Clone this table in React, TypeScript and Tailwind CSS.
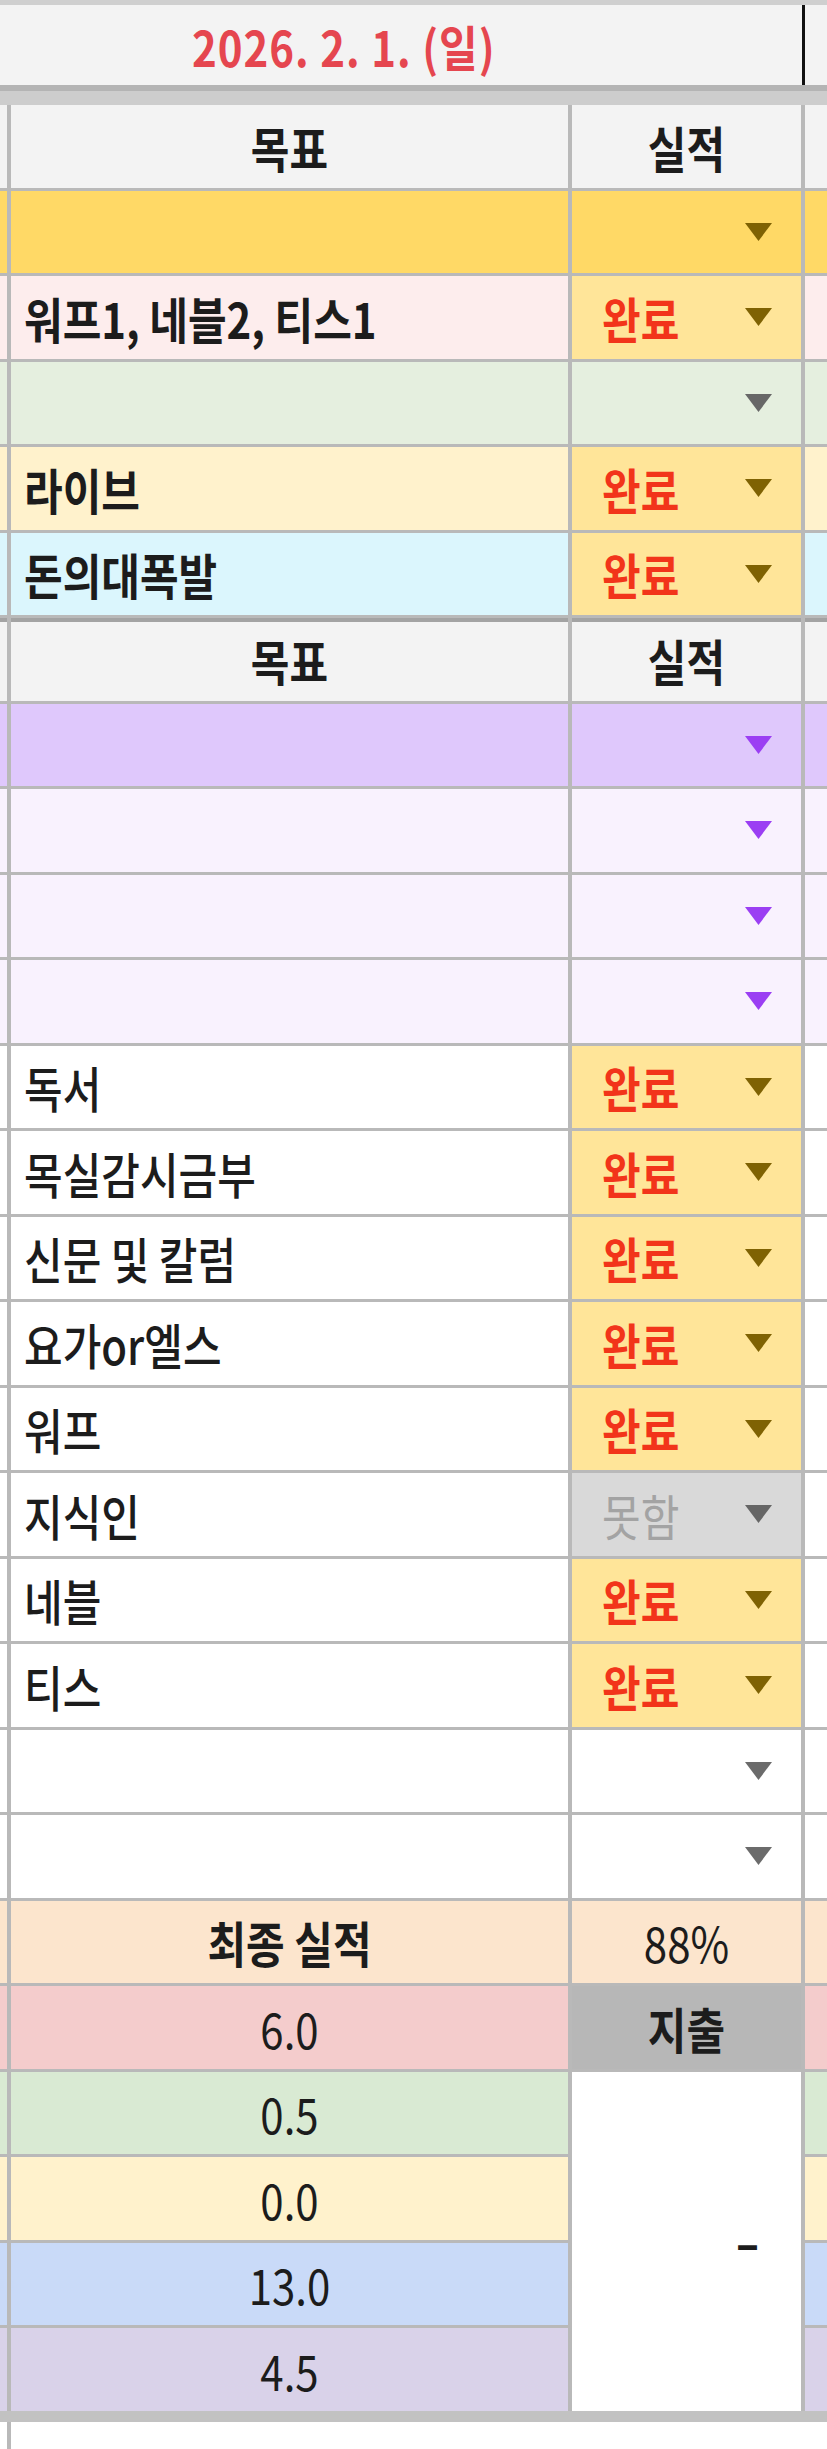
import React from "react";

type Goal = {
  label?: string;
  bg: string;
  status?: "완료" | "못함";
  cellBg?: string;
  arrow: string;
  bold?: boolean;
};

const font = "font-['Noto_Sans_CJK_KR','Noto_Sans',sans-serif]";

// sheet glyphs are a bit taller than Noto's, so stretch the text a little
function T({ children }: { children: React.ReactNode }) {
  return <span className="inline-block scale-y-[1.17]">{children}</span>;
}

function Arrow({ color }: { color: string }) {
  return (
    <svg width="27" height="18" viewBox="0 0 27 18" className="ml-auto mr-[29px] shrink-0">
      <path d="M0 0H27L13.5 18Z" fill={color} />
    </svg>
  );
}

function HeaderRow({ thick }: { thick?: boolean }) {
  const line = thick ? "shadow-[inset_0_4px_0_#a3a3a3]" : "";
  return (
    <>
      <div className={`col-start-1 h-[82.5px] bg-[#f3f3f3] ${line}`} />
      <div className={`col-start-2 flex h-[82.5px] items-center justify-center bg-[#f3f3f3] text-[42px] font-bold text-[#1c1c1c] ${line}`}>
        <T>목표</T>
      </div>
      <div className={`col-start-3 flex h-[82.5px] items-center justify-center bg-[#f3f3f3] text-[42px] font-bold text-[#1c1c1c] ${line}`}>
        <T>실적</T>
      </div>
      <div className={`col-start-4 h-[82.5px] bg-[#f3f3f3] ${line}`} />
    </>
  );
}

function GoalRow({ g }: { g: Goal }) {
  const statusColor = g.status === "못함" ? "text-[#a3a3a3] font-normal" : "text-[#f2341a] font-bold";
  return (
    <>
      <div className={`col-start-1 h-[82.5px] ${g.bg}`} />
      <div
        className={`col-start-2 flex h-[82.5px] items-center pl-[13px] text-[42px] text-[#1c1c1c] ${g.bg} ${
          g.bold ? "font-bold" : "font-medium"
        }`}
      >
        {g.label && <T>{g.label}</T>}
      </div>
      <div className={`col-start-3 flex h-[82.5px] items-center ${g.cellBg ?? g.bg}`}>
        {g.status && (
          <span className={`pl-[30px] text-[42px] ${statusColor}`}>
            <T>{g.status}</T>
          </span>
        )}
        <Arrow color={g.arrow} />
      </div>
      <div className={`col-start-4 h-[82.5px] ${g.bg}`} />
    </>
  );
}

const top: Goal[] = [
  { bg: "bg-[#ffd966]", arrow: "#7f6203" },
  { label: "워프1, 네블2, 티스1", bg: "bg-[#fdeded]", status: "완료", cellBg: "bg-[#ffe599]", arrow: "#7f6203", bold: true },
  { bg: "bg-[#e5efdf]", arrow: "#676767" },
  { label: "라이브", bg: "bg-[#fff2cc]", status: "완료", cellBg: "bg-[#ffe599]", arrow: "#7f6203", bold: true },
  { label: "돈의대폭발", bg: "bg-[#dbf6fd]", status: "완료", cellBg: "bg-[#ffe599]", arrow: "#7f6203", bold: true },
];

const bottom: Goal[] = [
  { bg: "bg-[#dfc8fc]", arrow: "#9b3ff3" },
  { bg: "bg-[#f9f2fe]", arrow: "#9b3ff3" },
  { bg: "bg-[#f9f2fe]", arrow: "#9b3ff3" },
  { bg: "bg-[#f9f2fe]", arrow: "#9b3ff3" },
  { label: "독서", bg: "bg-white", status: "완료", cellBg: "bg-[#ffe599]", arrow: "#7f6203" },
  { label: "목실감시금부", bg: "bg-white", status: "완료", cellBg: "bg-[#ffe599]", arrow: "#7f6203" },
  { label: "신문 및 칼럼", bg: "bg-white", status: "완료", cellBg: "bg-[#ffe599]", arrow: "#7f6203" },
  { label: "요가or엘스", bg: "bg-white", status: "완료", cellBg: "bg-[#ffe599]", arrow: "#7f6203" },
  { label: "워프", bg: "bg-white", status: "완료", cellBg: "bg-[#ffe599]", arrow: "#7f6203" },
  { label: "지식인", bg: "bg-white", status: "못함", cellBg: "bg-[#d9d9d9]", arrow: "#666666" },
  { label: "네블", bg: "bg-white", status: "완료", cellBg: "bg-[#ffe599]", arrow: "#7f6203" },
  { label: "티스", bg: "bg-white", status: "완료", cellBg: "bg-[#ffe599]", arrow: "#7f6203" },
  { bg: "bg-white", arrow: "#6b6b6b" },
  { bg: "bg-white", arrow: "#6b6b6b" },
];

const scores = [
  { value: "0.5", bg: "bg-[#d9ead3]" },
  { value: "0.0", bg: "bg-[#fff2cc]" },
  { value: "13.0", bg: "bg-[#c9daf8]" },
  { value: "4.5", bg: "bg-[#d9d2e9]" },
];

export default function App() {
  return (
    <div className={`min-h-[2449px] w-[827px] bg-white ${font}`}>
      <div className="h-[5px] bg-[#cfcfcf]" />
      <div className="flex h-[80px] items-center bg-[#f3f3f3]">
        <span className="pl-[192px] text-[42px] font-bold tracking-[1px] text-[#e5464f]">
          <T>2026. 2. 1. (일)</T>
        </span>
        <div className="ml-auto mr-[22px] h-full w-[3px] bg-[#111111]" />
      </div>
      <div className="h-[6px] bg-[#b4b4b4]" />
      <div className="h-[14px] bg-[#cdcdcd]" />

      <div className="grid grid-cols-[7px_557px_229px_1fr] gap-x-[4px] gap-y-[3px] bg-[#b9b9b9]">
        <HeaderRow />
        {top.map((g, i) => (
          <GoalRow key={`t${i}`} g={g} />
        ))}
        <HeaderRow thick />
        {bottom.map((g, i) => (
          <GoalRow key={`b${i}`} g={g} />
        ))}

        <div className="col-start-1 h-[82.5px] bg-[#fce5cd]" />
        <div className="col-start-2 flex h-[82.5px] items-center justify-center bg-[#fce5cd] text-[42px] font-bold text-[#1c1c1c]">
          <T>최종 실적</T>
        </div>
        <div className="col-start-3 flex h-[82.5px] items-center justify-center bg-[#fce5cd] text-[42px] text-[#1c1c1c]">
          <T>88%</T>
        </div>
        <div className="col-start-4 h-[82.5px] bg-[#fce5cd]" />

        <div className="col-start-1 h-[82.5px] bg-[#f4cccc]" />
        <div className="col-start-2 flex h-[82.5px] items-center justify-center bg-[#f4cccc] text-[42px] text-[#1c1c1c]">
          <T>6.0</T>
        </div>
        <div className="col-start-3 flex h-[82.5px] items-center justify-center bg-[#b7b7b7] text-[42px] font-bold text-[#1c1c1c]">
          <T>지출</T>
        </div>
        <div className="col-start-4 h-[82.5px] bg-[#f4cccc]" />

        {scores.map((s, i) => (
          <React.Fragment key={s.value}>
            <div className={`col-start-1 h-[82.5px] ${s.bg}`} />
            <div className={`col-start-2 flex h-[82.5px] items-center justify-center text-[42px] text-[#1c1c1c] ${s.bg}`}>
              <T>{s.value}</T>
            </div>
            {i === 0 && (
              <div className="col-start-3 row-span-4 flex items-center justify-end bg-white pr-[42px] text-[42px] font-black text-[#1c1c1c]">
                –
              </div>
            )}
            <div className={`col-start-4 h-[82.5px] ${s.bg}`} />
          </React.Fragment>
        ))}
      </div>
      <div className="h-[11px] bg-[#c2c2c2]" />
      <div className="ml-[7px] h-[27px] w-[4px] bg-[#b9b9b9]" />
    </div>
  );
}
